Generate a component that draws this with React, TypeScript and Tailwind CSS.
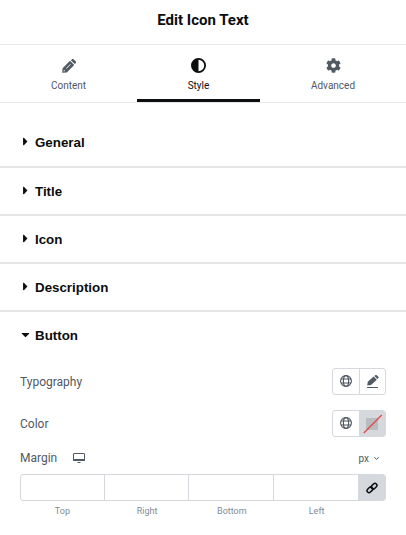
import { clsx } from "clsx"
import { FaCaretDown, FaCaretRight, FaCog } from "react-icons/fa"

const sections = ["General", "Title", "Icon", "Description"]
const sides = ["Top", "Right", "Bottom", "Left"]

function PencilIcon() {
  return (
    <svg width="14" height="14" viewBox="0 0 14 14" fill="currentColor">
      <path fillRule="evenodd" d="M.2 13.8l.4-4.6L8 1.8l4.2 4.2-7.4 7.4zM1.6 12.4l1.6-.3-1.3-1.3zM4 9.3l.4.4 4.3-4.3-.4-.4z" />
      <path d="M8.8 1.2L9.8.4a1.4 1.4 0 0 1 2 0l1.8 1.8a1.4 1.4 0 0 1 0 2l-.9.9z" />
    </svg>
  )
}

function ContrastIcon() {
  return (
    <svg width="15" height="15" viewBox="0 0 15 15">
      <circle cx="7.5" cy="7.5" r="6.6" fill="none" stroke="currentColor" strokeWidth="1.8" />
      <path d="M7.5 1a6.5 6.5 0 0 0 0 13z" fill="currentColor" />
    </svg>
  )
}

function GlobeIcon() {
  return (
    <svg width="12" height="12" viewBox="0 0 12 12" fill="none" stroke="currentColor" strokeWidth="1.15">
      <circle cx="6" cy="6" r="5.4" />
      <ellipse cx="6" cy="6" rx="2.6" ry="5.4" />
      <path d="M1 4h10M1 8h10" />
    </svg>
  )
}

function EditIcon() {
  return (
    <svg width="12" height="13" viewBox="0 0 12 13" fill="currentColor">
      <path d="M.2 10.6l.6-3.9L6.6 1.5l3.2 3.2-5.8 5.4zM7.3 1l1-.8a1 1 0 0 1 1.4 0l1.6 1.6a1 1 0 0 1 0 1.4l-.9.9z" />
      <path d="M0 12h11v1H0z" />
    </svg>
  )
}

function DesktopIcon() {
  return (
    <svg width="12" height="10" viewBox="0 0 12 10" fill="none" stroke="currentColor">
      <rect x=".5" y=".5" width="11" height="7" rx=".4" />
      <path d="M.2 7h11.6" strokeWidth="2" />
      <path d="M4.5 9.5h3" />
    </svg>
  )
}

function LinkIcon() {
  return (
    <svg width="12" height="12" viewBox="0 0 12 12" fill="none" stroke="currentColor" strokeWidth="1.5">
      <rect x="4.9" y="2.2" width="6.4" height="4" rx="2" transform="rotate(-45 8.1 4.2)" />
      <rect x=".7" y="5.8" width="6.4" height="4" rx="2" transform="rotate(-45 3.9 7.8)" />
    </svg>
  )
}

function Tab({ label, icon, active, className }: { label: string; icon: React.ReactNode; active?: boolean; className: string }) {
  return (
    <button
      className={clsx(
        "flex flex-col items-center border-b-3 pt-[13px] text-[10px] leading-3",
        active ? "border-[#0c0d0e] text-[#0c0d0e]" : "border-transparent text-[#515962]",
        className
      )}
    >
      <span className="mb-[7px] flex h-[15px] items-center">{icon}</span>
      {label}
    </button>
  )
}

export default function App() {
  return (
    <div className="h-[535px] w-[406px] overflow-hidden bg-white font-['Roboto',sans-serif] text-[#515962]">
      <header className="flex h-[45px] items-center justify-center border-b border-[#e6e8ea] pb-1 text-[15px] font-bold text-[#0c0d0e]">
        Edit Icon Text
      </header>

      <nav className="flex h-[58px] border-b border-[#e6e8ea]">
        <Tab label="Content" icon={<PencilIcon />} className="w-[137px]" />
        <Tab label="Style" icon={<ContrastIcon />} active className="w-[123px]" />
        <Tab label="Advanced" icon={<FaCog size={15} />} className="w-[146px]" />
      </nav>

      <div className="pt-[17px] font-['Liberation_Sans',sans-serif] text-[13.33px] font-bold text-[#0c0d0e]">
        {sections.map((name, idx) => (
          <div key={name} className={clsx("flex h-12 items-center border-b-2 border-[#e6e6e6] pl-[19px]", idx > 0 && "pt-0.5")}>
            <FaCaretRight size={13} className="mr-[3px] mb-[3px]" />
            {name}
          </div>
        ))}
        <div className="flex h-12 items-center pl-[19px]">
          <FaCaretDown size={13} className="mr-[3px] mb-[3px]" />
          Button
        </div>
      </div>

      <div className="px-5 pt-2 text-[12px]">
        <div className="flex h-[27px] items-center justify-between">
          Typography
          <div className="flex h-[27px] w-[54px] rounded-[3px] border border-[#d5d8dc]">
            <span className="flex flex-1 items-center justify-center border-r border-[#d5d8dc] pb-px"><GlobeIcon /></span>
            <span className="flex w-[25px] items-center justify-center"><EditIcon /></span>
          </div>
        </div>

        <div className="mt-[15px] flex h-[27px] items-center justify-between">
          Color
          <div className="flex h-[27px] w-[54px] overflow-hidden rounded-[3px] border border-[#d5d8dc]">
            <span className="flex flex-1 items-center justify-center border-r border-[#d5d8dc] pb-px"><GlobeIcon /></span>
            <span className="flex w-[25px] items-center justify-center bg-[#d5d8dc]">
              <svg width="20" height="20" viewBox="0 0 20 20">
                <rect x="3" y="4" width="12" height="12" rx="1" fill="#b9bbbe" />
                <path d="M.8 19L18.8 1" stroke="#e34b4b" strokeWidth="1.3" />
              </svg>
            </span>
          </div>
        </div>

        <div className="mt-[13px] flex h-4 items-center">
          Margin
          <span className="ml-4"><DesktopIcon /></span>
          <span className="mr-[7px] ml-auto flex items-center gap-[5px] text-[10px]">
            px
            <svg width="5" height="3" viewBox="0 0 5 3" fill="none" stroke="currentColor">
              <path d="M.3.3l2.2 2L4.7.3" />
            </svg>
          </span>
        </div>

        <div className="mt-2 flex h-[27px] overflow-hidden rounded-[3px] border border-[#d5d8dc]">
          {sides.map((side, idx) => (
            <input
              key={side}
              aria-label={side}
              className={clsx("min-w-0 outline-none", idx < 2 ? "w-[84px]" : "flex-1", idx < 3 && "border-r border-[#d5d8dc]")}
            />
          ))}
          <button className="flex w-[27px] items-center justify-center bg-[#d5d8dc] text-[#0c0d0e]">
            <LinkIcon />
          </button>
        </div>
        <div className="mt-1 flex pr-[27px] text-center text-[9px] leading-3 text-[#818a96]">
          {sides.map(side => <span key={side} className="flex-1">{side}</span>)}
        </div>
      </div>
    </div>
  )
}
